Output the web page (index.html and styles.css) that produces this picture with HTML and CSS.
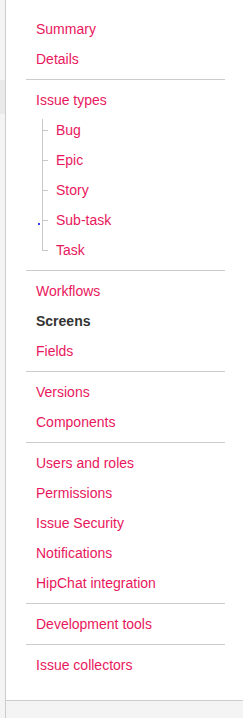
FILE: index.html
```html
<!DOCTYPE html>
<html lang="en">
<head>
    <meta charset="UTF-8">
    <meta name="viewport" content="width=device-width, initial-scale=1.0">
    <title>Project settings</title>
    <link rel="stylesheet" href="styles.css">
</head>
<body>
    <div class="page">
        <div class="gutter">
            <div class="gutter-active"></div>
        </div>
        <div class="content">
            <nav class="settings-nav">
                <ul class="nav-group">
                    <li><a href="#">Summary</a></li>
                    <li><a href="#">Details</a></li>
                </ul>
                <ul class="nav-group">
                    <li><a href="#">Issue types</a></li>
                    <li>
                        <ul class="tree">
                            <li><a href="#">Bug</a></li>
                            <li><a href="#">Epic</a></li>
                            <li><a href="#">Story</a></li>
                            <li><span class="focus-dot"></span><a href="#">Sub-task</a></li>
                            <li><a href="#">Task</a></li>
                        </ul>
                    </li>
                </ul>
                <ul class="nav-group">
                    <li><a href="#">Workflows</a></li>
                    <li class="selected">Screens</li>
                    <li><a href="#">Fields</a></li>
                </ul>
                <ul class="nav-group">
                    <li><a href="#">Versions</a></li>
                    <li><a href="#">Components</a></li>
                </ul>
                <ul class="nav-group">
                    <li><a href="#">Users and roles</a></li>
                    <li><a href="#">Permissions</a></li>
                    <li><a href="#">Issue Security</a></li>
                    <li><a href="#">Notifications</a></li>
                    <li><a href="#">HipChat integration</a></li>
                </ul>
                <ul class="nav-group">
                    <li><a href="#">Development tools</a></li>
                </ul>
                <ul class="nav-group">
                    <li><a href="#">Issue collectors</a></li>
                </ul>
            </nav>
        </div>
    </div>
</body>
</html>
```

FILE: styles.css
```css
body {
    font-family: "Liberation Sans", Arial, sans-serif;
    font-size: 14px;
    margin: 0;
    padding: 0;
    background-color: #f4f4f4;
    color: #333;
}

.page {
    display: flex;
    min-height: 718px;
}

.gutter {
    width: 5px;
    flex-shrink: 0;
}
.gutter-active {
    margin-top: 80px;
    height: 34px;
    background-color: #e9e9e9;
}

.content {
    flex: 1;
    border-left: 1px solid #ccc;
}

.settings-nav {
    background-color: #fff;
    border-bottom: 1px solid #ccc;
    padding: 14px 18px 20px 20px;
}

ul {
    list-style: none;
    margin: 0;
    padding: 0;
}

.nav-group + .nav-group {
    border-top: 1px solid #ccc;
    margin-top: 5px;
    padding-top: 5px;
}

.nav-group li {
    line-height: 30px;
    padding-left: 10px;
}

a {
    text-decoration: none;
    color: #e8175d; /* Pink */
}

.selected {
    font-weight: bold;
    color: #333;
}

/* Tree of issue types */
.nav-group .tree {
    margin-left: 6px;
}
.nav-group .tree li {
    position: relative;
    padding-left: 14px;
}
.tree li::before {
    content: "";
    position: absolute;
    left: 0;
    top: 0;
    bottom: 0;
    border-left: 1px solid #c8c8c8;
}
.tree li:first-child::before {
    top: 4px;
}
.tree li:last-child::before {
    bottom: 14px;
}
.tree li::after {
    content: "";
    position: absolute;
    left: 0;
    top: 15px;
    width: 6px;
    border-top: 1px solid #c8c8c8;
}

.focus-dot {
    position: absolute;
    left: -4px;
    top: 18px;
    width: 2px;
    height: 2px;
    background-color: #3a3aff;
}
```
